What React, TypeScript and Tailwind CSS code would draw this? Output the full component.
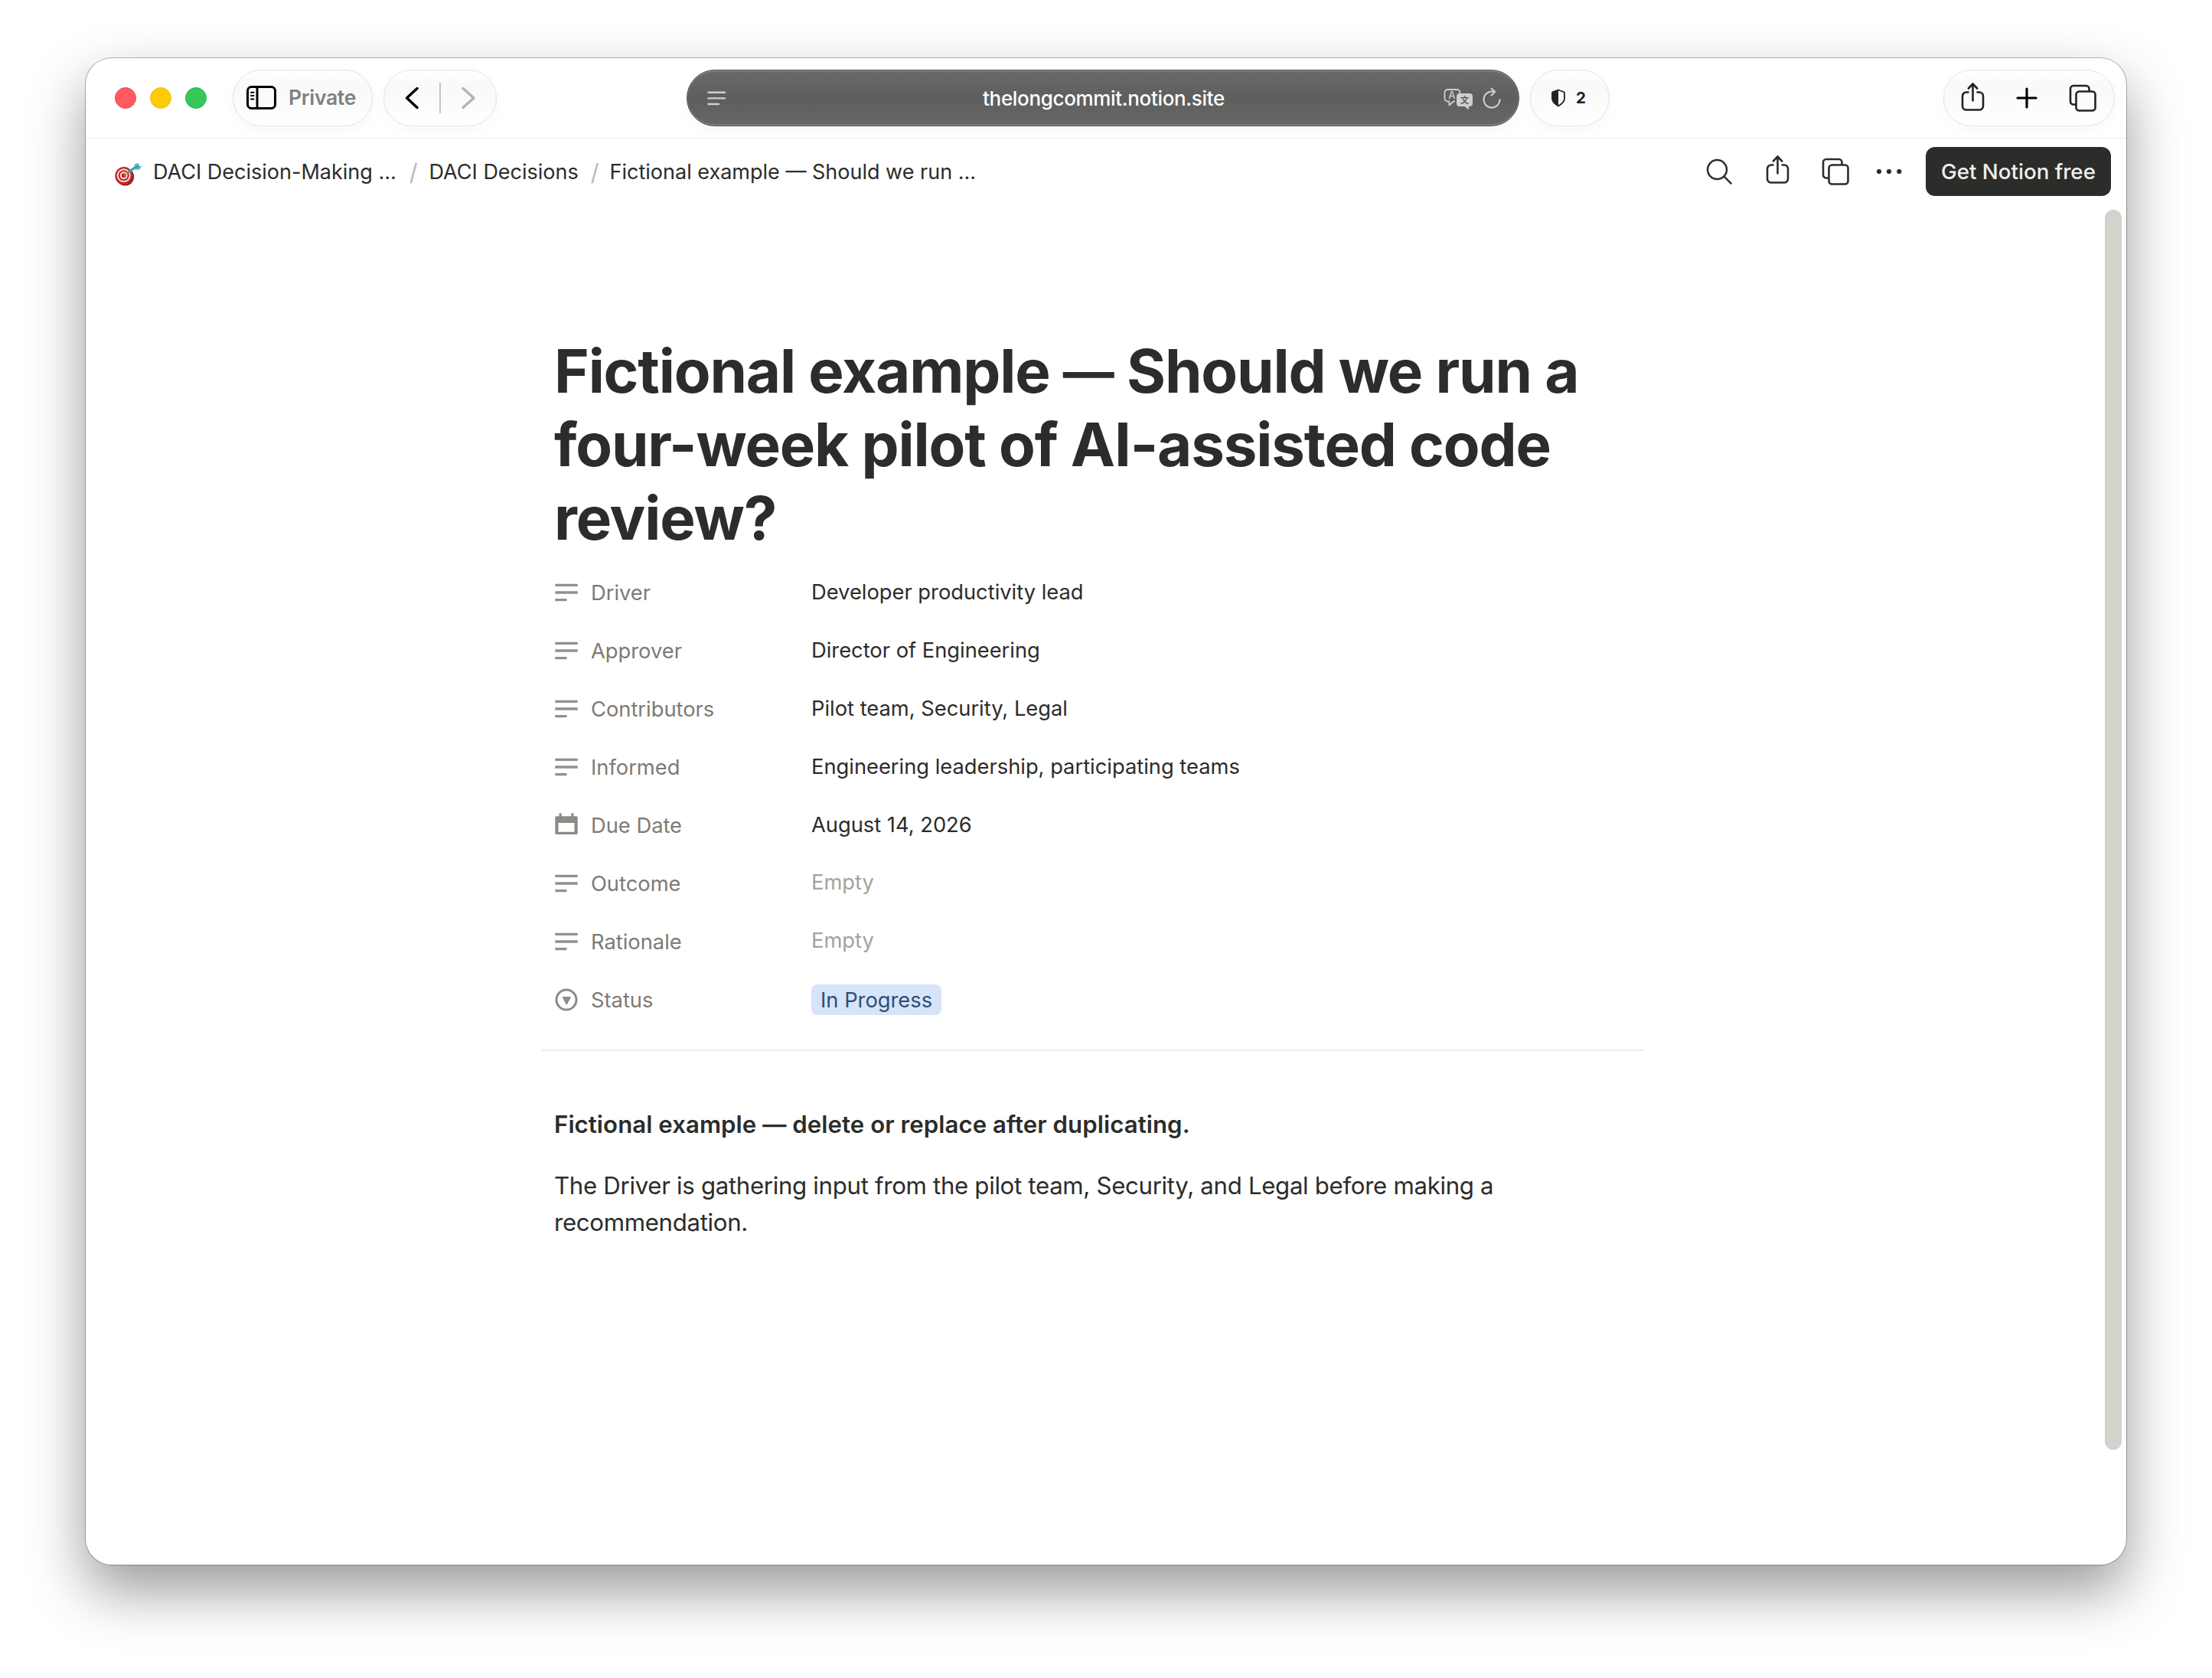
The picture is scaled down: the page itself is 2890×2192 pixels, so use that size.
import type { ReactNode } from 'react'

type IconProps = { className?: string }

function SidebarIcon() {
  return (
    <svg width="40" height="34" viewBox="0 0 40 34" fill="none" stroke="#000" strokeWidth="3" strokeLinecap="round">
      <rect x="1.5" y="2.5" width="36" height="28" rx="5" />
      <path d="M14 2.5v28" strokeLinecap="butt" />
      <path d="M6 9.7h3.5M6 14h3.5M6 18.4h3.5" strokeWidth="2" />
    </svg>
  )
}

function ShareIcon({ className }: IconProps) {
  return (
    <svg className={className} width="32" height="40" viewBox="0 0 32 40" fill="none" stroke="currentColor" strokeWidth="2.6" strokeLinecap="round" strokeLinejoin="round">
      <path d="M10.500 13.500H7a5 5 0 0 0-5 5v13a5 5 0 0 0 5 5h17a5 5 0 0 0 5-5v-13a5 5 0 0 0-5-5h-3.500" strokeLinecap="butt" />
      <path d="M15.500 24.500V2.800M9.800 8.500l5.700-6 5.700 6" />
    </svg>
  )
}

function TabsIcon({ className }: IconProps) {
  return (
    <svg className={className} width="36" height="36" viewBox="0 0 36 36" fill="none" stroke="currentColor" strokeWidth="2.600">
      <path d="M9.500 26.500H6a4 4 0 0 1-4-4V6a4 4 0 0 1 4-4h16.500a4 4 0 0 1 4 4v3" />
      <rect x="9.500" y="9.500" width="25" height="25" rx="4" />
    </svg>
  )
}

function TranslateIcon() {
  return (
    <svg width="40" height="32" viewBox="0 -3 40 32" fontFamily="'Inter','Noto Sans CJK SC',sans-serif">
      <path d="M15 17.500h-2l-5.500 5v-5h-2a4 4 0 0 1-4-4V6a4 4 0 0 1 4-4h12a4 4 0 0 1 4 4v1" fill="none" stroke="#cfcfcf" strokeWidth="1.800" strokeLinejoin="round" />
      <text x="10.800" y="14" fontSize="13" fontWeight="500" textAnchor="middle" fill="#cfcfcf">A</text>
      <path d="M21 7h13a4 4 0 0 1 4 4v9a4 4 0 0 1-4 4h-1v4.500L27.500 24H21a4 4 0 0 1-4-4v-9a4 4 0 0 1 4-4z" fill="#cfcfcf" />
      <text x="27.500" y="19.700" fontSize="11.500" fontWeight="700" textAnchor="middle" fill="#5c5c5c">文</text>
    </svg>
  )
}

function TextIcon() {
  return (
    <svg width="32" height="32" viewBox="0 0 32 32" stroke="#91908c" strokeWidth="3.300">
      <path d="M1.300 6.300h29.400M1.300 16h29.400M1.300 25.700h15.200" />
    </svg>
  )
}

function CalendarIcon() {
  return (
    <svg width="32" height="32" viewBox="0 0 32 32">
      <path fill="#8e8b86" fillRule="evenodd" d="M6.500 .3h3.200v4h12.600v-4h3.200v4h3.700q1.500 0 1.500 1.500V26.500q0 1.500-1.500 1.500H2.800q-1.500 0-1.500-1.500V5.800q0-1.500 1.500-1.500h3.700zM5.500 13v11.800h21V13z" />
    </svg>
  )
}

function StatusIcon() {
  return (
    <svg width="32" height="32" viewBox="0 0 32 32">
      <circle cx="16" cy="16" r="13" fill="none" stroke="#8e8b86" strokeWidth="3" />
      <path d="M11.500 12h9.500q1.300 0 .7 1.100l-4.600 8.600q-.8 1.200-1.600 0l-4.700-8.600q-.6-1.100.7-1.100z" fill="#8e8b86" />
    </svg>
  )
}

function TargetIcon() {
  return (
    <svg width="36" height="38" viewBox="0 0 36 38">
      <ellipse cx="13.500" cy="26" rx="11.500" ry="11.500" fill="#8f1518" />
      <circle cx="11.900" cy="24.700" r="11.600" fill="#c92427" />
      <circle cx="11.700" cy="24.200" r="8.900" fill="#f3e6e3" />
      <circle cx="11.700" cy="24.200" r="7" fill="#c22527" />
      <circle cx="11.700" cy="24.200" r="4.900" fill="#f3e6e3" />
      <circle cx="11.700" cy="24.200" r="2.900" fill="#c22527" />
      <path d="M12.500 24l7-5.500" stroke="#b89b4e" strokeWidth="1.600" />
      <path d="M18.500 19.500L28 12.500" stroke="#3aa0b0" strokeWidth="3.400" strokeLinecap="round" />
      <path d="M25.500 14l.5-4.500L31 8l.5 3.500 3.500 1-2.500 3.700-5 .8z" fill="#56b9c4" />
      <path d="M26.500 14.500l5-3" stroke="#2c8190" strokeWidth="1.200" />
    </svg>
  )
}

const properties: { icon: ReactNode; label: string; value: string; kind?: 'empty' | 'tag' }[] = [
  { icon: <TextIcon />, label: 'Driver', value: 'Developer productivity lead' },
  { icon: <TextIcon />, label: 'Approver', value: 'Director of Engineering' },
  { icon: <TextIcon />, label: 'Contributors', value: 'Pilot team, Security, Legal' },
  { icon: <TextIcon />, label: 'Informed', value: 'Engineering leadership, participating teams' },
  { icon: <CalendarIcon />, label: 'Due Date', value: 'August 14, 2026' },
  { icon: <TextIcon />, label: 'Outcome', value: 'Empty', kind: 'empty' },
  { icon: <TextIcon />, label: 'Rationale', value: 'Empty', kind: 'empty' },
  { icon: <StatusIcon />, label: 'Status', value: 'In Progress', kind: 'tag' },
]

const valueStyles = {
  text: '',
  empty: 'pb-[2px] text-[#a5a29d]',
  tag: 'flex h-10 items-center rounded-lg bg-[#d6e4f9] px-3 pt-[2px] text-[#2a4e79]',
}

const pill =
  'flex h-[74px] items-center rounded-full border border-[#e2e2e2] bg-linear-to-b from-white via-[#f9f9f9] via-30% to-white shadow-[0_6px_18px_rgba(0,0,0,0.03)]'

function Toolbar() {
  return (
    <header className="flex h-[105px] shrink-0 items-center border-b border-[#ececec] pr-[15px] pl-[38px]">
      <div className="flex gap-[18px]">
        <span className="size-7 rounded-full border border-[#ec4a52] bg-[#ff5a60]" />
        <span className="size-7 rounded-full border border-[#eebd15] bg-[#fdca06]" />
        <span className="size-7 rounded-full border border-[#27b54c] bg-[#34c759]" />
      </div>
      <div className={`${pill} ml-[34px] w-[183px] pl-[17px]`}>
        <SidebarIcon />
        <span className="ml-[15px] text-[26.500px] font-semibold tracking-[-0.3px] text-[#808080]">Private</span>
      </div>
      <div className={`${pill} ml-[14px] w-[148px] pl-[26px]`}>
        <svg width="24" height="32" viewBox="0 0 24 32" fill="none" stroke="#000" strokeWidth="3.500" strokeLinecap="round" strokeLinejoin="round">
          <path d="M17 3.500L3.500 16 17 28.500" />
        </svg>
        <span className="ml-[22px] h-10 w-0.5 bg-[#c6c6c6]" />
        <svg className="ml-[24px]" width="24" height="32" viewBox="0 0 24 32" fill="none" stroke="#b4b4b4" strokeWidth="3.500" strokeLinecap="round" strokeLinejoin="round">
          <path d="M5 3.500L19 16 5 28.500" />
        </svg>
      </div>
      <div className="ml-[248px] flex h-[74px] w-[1088px] items-center rounded-full border border-[#4a4a4a] bg-linear-to-b from-[#6a6a6a] via-[#5e5e5e] to-[#676767] pr-[22px] pl-[26px] shadow-[inset_0_1px_1px_#999,inset_0_-1px_1px_#999,0_8px_20px_rgba(0,0,0,0.03)]">
        <svg width="26" height="22" viewBox="0 0 26 22" stroke="#cfcfcf" strokeWidth="2.400" strokeLinecap="round">
          <path d="M1.500 3.700h21.500M1.500 11.400h21.500M1.500 19h13.500" />
        </svg>
        <span className="flex-1 pl-[48px] text-center text-[26px] font-medium tracking-[-0.34px] text-white">
          thelongcommit.notion.site
        </span>
        <TranslateIcon />
        <svg className="ml-[10px]" width="26" height="30" viewBox="0 0 26 30" fill="none" stroke="#cfcfcf" strokeWidth="2" strokeLinecap="round" strokeLinejoin="round">
          <path d="M23.500 17a10.500 10.500 0 1 1-10.500-10.500h4M12.500 2.500l4.700 4.200-4.700 5" />
        </svg>
      </div>
      <div className={`${pill} ml-[14px] w-[104px] pl-[26px]`}>
        <svg width="20" height="24" viewBox="0 0 20 24">
          <path d="M10 1.500l8 3v8.500c0 4-3 6.500-8 9.500-5-3-8-5.500-8-9.500V4.500z" fill="none" stroke="#222" strokeWidth="1.800" strokeLinejoin="round" />
          <path d="M10 1.500v21c-5-3-8-5.500-8-9.500V4.500z" fill="#222" />
        </svg>
        <span className="ml-[13px] text-[20.500px] font-bold text-[#1f1f1f]">2</span>
      </div>
      <div className={`${pill} ml-auto w-[224px] pl-[22px] text-[#222]`}>
        <ShareIcon className="-mt-0.5" />
        <svg className="-mt-px ml-[39px]" width="30" height="30" viewBox="0 0 30 30" stroke="#000" strokeWidth="3.200" strokeLinecap="round">
          <path d="M15 3v24M3 15h24" />
        </svg>
        <TabsIcon className="ml-[40px]" />
      </div>
    </header>
  )
}

function NotionBar() {
  return (
    <nav className="flex h-[86px] shrink-0 items-center pr-[20px] pl-[38px] text-[27px] text-[#2c2c2b]">
      <TargetIcon />
      <div className="flex items-center pt-[2px]">
        <span className="ml-[14px]">DACI Decision-Making ...</span>
        <span className="ml-[17px] text-[30px] text-[#b9b8b5]">/</span>
        <span className="ml-[15px]">DACI Decisions</span>
        <span className="ml-[16px] text-[30px] text-[#b9b8b5]">/</span>
        <span className="ml-[14px]">Fictional example — Should we run ...</span>
      </div>
      <div className="ml-auto flex items-center">
        <svg width="36" height="36" viewBox="0 0 36 36" fill="none" stroke="currentColor" strokeWidth="2.500" strokeLinecap="round">
          <circle cx="14.500" cy="15.600" r="12.500" />
          <path d="M23.600 24.700l9 9" />
        </svg>
        <ShareIcon className="-mt-1 ml-[42px]" />
        <TabsIcon className="ml-[41px]" />
        <svg className="ml-[34px]" width="36" height="8" viewBox="0 0 36 8" fill="currentColor">
          <circle cx="5" cy="4" r="3.100" />
          <circle cx="18" cy="4" r="3.100" />
          <circle cx="31.300" cy="4" r="3.100" />
        </svg>
        <button className="ml-[30px] h-16 w-[242px] rounded-xl bg-[#2c2c2b] pt-[2px] text-[27.700px] font-medium text-[#f0efed]">
          Get Notion free
        </button>
      </div>
    </nav>
  )
}

export default function App() {
  return (
    <div className="h-[2192px] w-[2890px] overflow-hidden bg-white px-[112px] pt-[76px] font-['Inter','Noto_Sans',sans-serif]">
      <div className="relative flex h-[1968px] w-[2666px] flex-col rounded-[34px] bg-white shadow-[0_0_0_1px_rgba(0,0,0,0.27),0_34px_74px_rgba(0,0,0,0.4)]">
        <Toolbar />
        <NotionBar />
        <main className="ml-[612px] w-[1424px] pt-[170px] text-[#2c2c2b]">
          <h1 className="text-[78px] leading-[96px] font-bold tracking-[-1.15px]">
            Fictional example{' '}
            <span className="relative -top-[3px] text-[67px] leading-none">—</span> Should we run a<br />
            four-week pilot of AI-assisted code<br />
            review?
          </h1>
          <dl className="mt-[11px] text-[27.300px]">
            {properties.map((p) => (
              <div key={p.label} className="flex h-[76px] items-center">
                <dt className="flex w-[336px] items-center text-[#7d7a75]">
                  {p.icon}
                  <span className="ml-[16px] pt-[2px]">{p.label}</span>
                </dt>
                <dd className={valueStyles[p.kind ?? 'text']}>{p.value}</dd>
              </div>
            ))}
          </dl>
          <hr className="mt-[27px] -ml-[16px] w-[1440px] border-t-2 border-[#ededec]" />
          <p className="mt-[72px] text-[31.200px] leading-[48px] font-semibold tracking-[0.05px]">
            Fictional example — delete or replace after duplicating.
          </p>
          <p className="mt-[32px] text-[31.200px] leading-[48px] tracking-[-0.31px]">
            The Driver is gathering input from the pilot team, Security, and Legal before making a<br />
            recommendation.
          </p>
        </main>
        {/* Scrollbar overlaps the page content */}
        <div className="absolute top-[198px] right-[6px] h-[1620px] w-[22px] rounded-full bg-[#d3d2cd]" />
      </div>
    </div>
  )
}
